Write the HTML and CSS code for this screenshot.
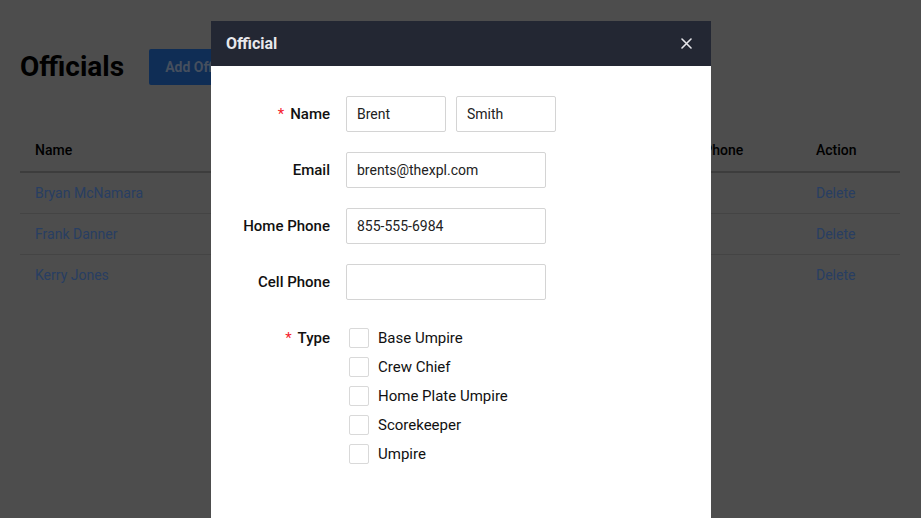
FILE: index.html
```html
<!DOCTYPE html>
<html lang="en">
<head>
<meta charset="utf-8">
<title>Officials</title>
<link rel="stylesheet" href="styles.css">
</head>
<body>
<div class="page">
  <div class="page-head">
    <h1 class="title">Officials</h1>
    <button class="btn-add" type="button">Add Official</button>
  </div>
  <table class="grid">
    <thead>
      <tr><th class="c-name">Name</th><th class="c-email">Email</th><th class="c-home">Home Phone</th><th class="c-cell">Cell Phone</th><th class="c-action">Action</th></tr>
    </thead>
    <tbody>
      <tr><td><a href="#">Bryan McNamara</a></td><td></td><td></td><td></td><td><a href="#">Delete</a></td></tr>
      <tr><td><a href="#">Frank Danner</a></td><td></td><td></td><td></td><td><a href="#">Delete</a></td></tr>
      <tr class="last"><td><a href="#">Kerry Jones</a></td><td></td><td></td><td></td><td><a href="#">Delete</a></td></tr>
    </tbody>
  </table>
</div>

<div class="modal">
  <div class="modal-head">
    <span class="modal-title">Official</span>
    <button class="modal-close" type="button" aria-label="Close">
      <svg width="11" height="11" viewBox="0 0 11 11"><path d="M1 1 L10 10 M10 1 L1 10" stroke="#e6e6ea" stroke-width="1.6" stroke-linecap="round"/></svg>
    </button>
  </div>
  <div class="modal-body">
    <div class="form-row">
      <label class="form-label"><span class="req">*</span>Name</label>
      <div class="fields">
        <input class="input input-sm" type="text" value="Brent">
        <input class="input input-sm" type="text" value="Smith">
      </div>
    </div>
    <div class="form-row">
      <label class="form-label">Email</label>
      <div class="fields"><input class="input input-md" type="text" value="brents@thexpl.com"></div>
    </div>
    <div class="form-row">
      <label class="form-label">Home Phone</label>
      <div class="fields"><input class="input input-md" type="text" value="855-555-6984"></div>
    </div>
    <div class="form-row">
      <label class="form-label">Cell Phone</label>
      <div class="fields"><input class="input input-md" type="text" value=""></div>
    </div>
    <div class="form-row type-row">
      <label class="form-label"><span class="req">*</span>Type</label>
      <div class="checks">
        <label class="check"><span class="box"></span>Base Umpire</label>
        <label class="check"><span class="box"></span>Crew Chief</label>
        <label class="check"><span class="box"></span>Home Plate Umpire</label>
        <label class="check"><span class="box"></span>Scorekeeper</label>
        <label class="check"><span class="box"></span>Umpire</label>
      </div>
    </div>
  </div>
</div>
</body>
</html>
```
FILE: styles.css
```css
* { box-sizing: border-box; }
html, body { margin: 0; padding: 0; }
body {
  background: #4d4d4d;
  font-family: Roboto, "Liberation Sans", Arial, sans-serif;
  color: #000;
  width: 921px;
  height: 518px;
  overflow: hidden;
}
.page { padding: 49px 21px 0 20px; }
.page-head {
  display: flex;
  align-items: center;
  gap: 25px;
  height: 36px;
}
.title {
  margin: 0;
  font-size: 28px;
  font-weight: 700;
  color: #000;
  line-height: 36px;
}
.btn-add {
  height: 36px;
  padding: 0 16px;
  border: none;
  border-radius: 2px;
  background: #0f2d55;
  color: #454f5e;
  font-family: inherit;
  font-size: 14px;
  font-weight: 700;
}
.grid {
  margin-top: 43px;
  width: 880px;
  table-layout: fixed;
  border-collapse: collapse;
  font-size: 14px;
}
.grid th {
  text-align: left;
  font-weight: 500;
  height: 44px;
  padding: 0 15px;
  border-bottom: 2px solid #3d3d3d;
  color: #000;
}
.grid td {
  height: 41px;
  padding: 0 15px;
  border-bottom: 1px solid #444;
}
.grid tr.last td { border-bottom: none; }
.grid a { color: #283e62; text-decoration: none; }
.c-name { width: 200px; }
.c-email { width: 240px; }
.c-home { width: 201px; }
.c-cell { width: 140px; }

.modal {
  position: absolute;
  left: 211px;
  top: 21px;
  width: 500px;
  height: 520px;
  background: #fff;
}
.modal-head {
  height: 45px;
  background: #232733;
  display: flex;
  align-items: center;
  justify-content: space-between;
  padding: 0 18px 0 15px;
}
.modal-title {
  color: #e8e8ec;
  font-size: 16px;
  font-weight: 700;
}
.modal-close {
  background: none;
  border: none;
  padding: 0;
  width: 14px;
  height: 14px;
  display: flex;
  align-items: center;
  justify-content: center;
}
.modal-body {
  padding: 30px 0 0 0;
  display: flex;
  flex-direction: column;
  gap: 20px;
}
.form-row {
  display: flex;
  align-items: center;
  gap: 16px;
}
.form-label {
  width: 119px;
  text-align: right;
  font-size: 15px;
  font-weight: 500;
  color: #111;
}
.req {
  color: #f5222d;
  margin-right: 6px;
  font-weight: 400;
}
.fields { display: flex; gap: 10px; }
.input {
  height: 36px;
  border: 1px solid #d4d4d4;
  border-radius: 2px;
  padding: 0 10px;
  font-family: inherit;
  font-size: 14px;
  color: #222;
  outline: none;
}
.input-sm { width: 100px; }
.input-md { width: 200px; }
.type-row { align-items: flex-start; margin-top: 8px; }
.type-row .form-label { line-height: 20px; }
.checks {
  display: flex;
  flex-direction: column;
  gap: 9px;
  padding-left: 3px;
}
.check {
  display: flex;
  align-items: center;
  gap: 9px;
  font-size: 15px;
  color: #111;
  line-height: 20px;
}
.box {
  width: 20px;
  height: 20px;
  border: 1px solid #d9d9d9;
  border-radius: 2px;
  background: #fff;
}
```
